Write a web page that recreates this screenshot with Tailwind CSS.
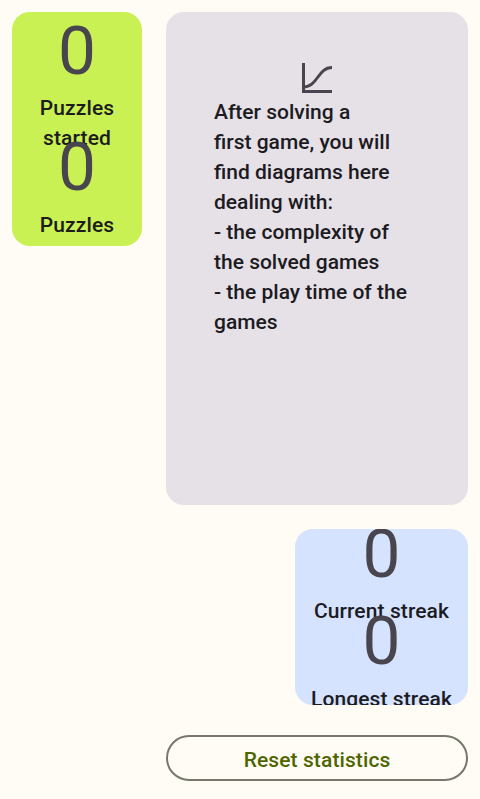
<!DOCTYPE html>
<html lang="en"><head><meta charset="utf-8"><title>Statistics</title>
<script src="https://cdn.jsdelivr.net/npm/@tailwindcss/browser@4"></script></head>
<body class="h-[799px] w-[480px] overflow-hidden bg-[#fffcf5] p-3 font-['Roboto',sans-serif] text-[21px] leading-[30px] font-medium tracking-[0.1px] text-[#1c1b1f]">
<main class="flex gap-6">
<section class="h-[234px] w-[130px] shrink-0 overflow-hidden rounded-[18px] bg-[#c9f153] text-center">
<div class="h-[117px]"><div class="h-[81px] pt-[1px] text-[67.5px] leading-[76px] font-normal tracking-normal text-[#49454e]">0</div><div>Puzzles started</div></div>
<div class="h-[117px] overflow-hidden"><div class="h-[81px] text-[67.5px] leading-[76px] font-normal tracking-normal text-[#49454e]">0</div><div>Puzzles</div></div>
</section>
<div class="flex w-[302px] flex-col">
<section class="h-[493px] rounded-[18px] bg-[#e6e0e7] px-12 pt-[48px]">
<svg class="mx-auto mb-px block h-9 w-9" viewBox="0 0 36 36" fill="none" stroke="#49454e" stroke-width="3"><path d="M4.500 3V31.500H33"/><path d="M4.500 27C19 27 18.500 7.500 33 7.500"/></svg>
<p class="whitespace-pre tracking-normal">After solving a
first game, you will
find diagrams here
dealing with:
- the complexity of
the solved games
- the play time of the
games</p>
</section>
<section class="mt-6 flex h-[176px] w-[173px] flex-col self-end overflow-hidden rounded-[18px] bg-[#d6e3ff] text-center">
<div class="flex h-[88px] shrink-0 flex-col"><div class="-mt-[13px] h-[80px] shrink-0 text-[67.5px] leading-[76px] font-normal tracking-normal text-[#49454e]">0</div><div>Current streak</div></div>
<div class="flex h-[88px] shrink-0 flex-col"><div class="-mt-[14px] h-[81px] shrink-0 text-[67.5px] leading-[76px] font-normal tracking-normal text-[#49454e]">0</div><div>Longest streak</div></div>
</section>
<button class="mt-[30px] h-[46px] rounded-full border-2 border-[#76786b] pt-[3px] leading-[30px] text-[#4f6600]">Reset statistics</button>
</div></main></body></html>
